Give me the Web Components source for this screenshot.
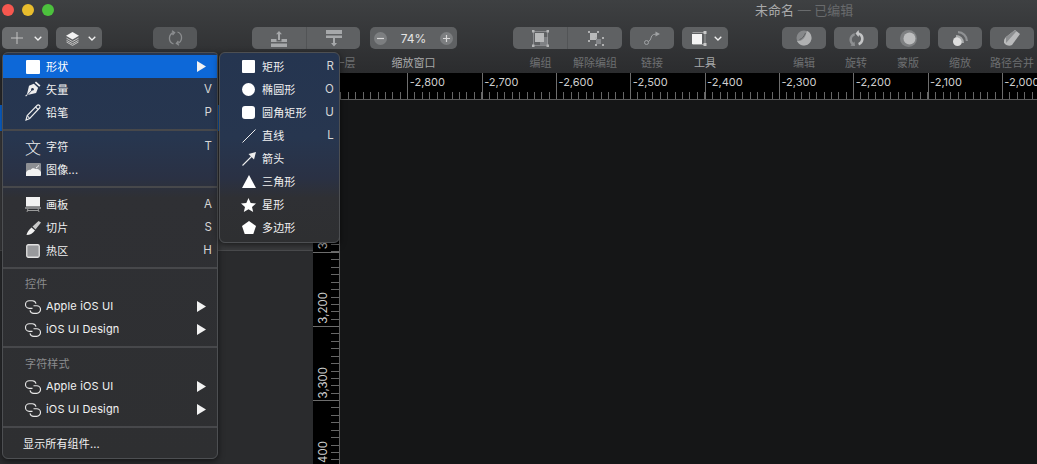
<!doctype html>
<html lang="zh">
<head>
<meta charset="utf-8">
<title>未命名</title>
<style>
  html, body { margin: 0; height: 100%; background: #151617; overflow: hidden; }
  body { font-family: Inter, "Noto Sans CJK SC", sans-serif; }
  svg { display: block; }
</style>
</head>
<body>
<svg width="0" height="0" style="position:absolute">
  <defs>
    <g id="sym" fill="none" stroke="#e8e8e8" stroke-width="1.150">
      <path d="M7.500 8.300H4.300a3.800 3.800 0 0 1 0-7.600h3a3.800 3.800 0 0 1 3.700 3"/>
      <path d="M8.500 5.700h3.200a3.800 3.800 0 0 1 0 7.600h-3a3.800 3.800 0 0 1-3.700-3"/>
    </g>
  </defs>
</svg>

<app-window>
  <tool-bar slot="top" heading="未命名" status="— 已编辑">
    <tb-btn drop bright style="--w:46px">
      <svg width="12" height="12" viewBox="0 0 12 12"><path d="M6 0v12M0 6h12" stroke="#c4c4c4" stroke-width="1"/></svg>
    </tb-btn>
    <tb-btn drop style="--w:46px">
      <svg width="15" height="15" viewBox="0 0 15 15"><path d="M7.500 1L14 4.800 7.500 8.600 1 4.800z" fill="#f2f2f2"/><path d="M1.500 7.200l6 3.400 6-3.400M1.500 9.300l6 3.400 6-3.400M1.500 11l6 3.400 6-3.400" fill="none" stroke="#cfcfcf" stroke-width=".9"/></svg>
    </tb-btn>
    <tb-btn dim style="--w:44px;margin-left:43px">
      <svg width="15" height="16" viewBox="0 0 15 16" fill="none" stroke="#8b8d8f" stroke-width="1.300"><path d="M5.500 14A6 6 0 0 1 6 2.500"/><path d="M9.500 2A6 6 0 0 1 9 13.500"/><path d="M4 .8l2.600 1.800L4.500 5M11 15.200l-2.600-1.800 2-2.400"/></svg>
    </tb-btn>
    <tb-btn seg="l" style="--w:55px;margin-left:47px">
      <svg width="16" height="17" viewBox="0 0 16 17"><path d="M8 1l3 3.200H9V10H7V4.200H5z" fill="#a6a8aa"/><path d="M0 9h5.500v2.500H10.500V9H16v3H0zM0 13.500h16V17H0z" fill="#a6a8aa"/></svg>
    </tb-btn>
    <tb-btn seg="r" label="下移一层" style="--w:53px;margin-left:-8px">
      <svg width="16" height="17" viewBox="0 0 16 17"><path d="M0 0h16v4H0zM0 5.500h16V8H9v5h2l-3 3.500L5 13h2V8H0z" fill="#a6a8aa"/></svg>
    </tb-btn>
    <zoom-stepper value="74%" label="缩放窗口" style="margin-left:2px"></zoom-stepper>
    <tb-btn seg="l" label="编组" style="--w:55px;margin-left:48px">
      <svg width="17" height="17" viewBox="0 0 17 17"><rect x="8" y="7" width="8" height="8" fill="#7f8184"/><rect x="3" y="3" width="9" height="9" fill="#b8b9ba"/><path d="M1.500 1.500h14v14h-14z" fill="none" stroke="#a4a5a7" stroke-width=".6"/><path d="M0 0h2.500v2.500H0zM14.500 0H17v2.500h-2.500zM0 14.500h2.500V17H0zM14.500 14.500H17V17h-2.500z" fill="#b4b5b6"/></svg>
    </tb-btn>
    <tb-btn seg="r" label="解除编组" style="--w:54px;margin-left:-8px">
      <svg width="17" height="17" viewBox="0 0 17 17"><rect x="3" y="3" width="7" height="7" fill="#b8b9ba"/><rect x="9" y="9" width="5" height="5" fill="#85878a"/><path d="M1 1h2v2H1zM10 1h2v2h-2zM1 10h2v2H1zM8 7h2v2H8zM15 7h2v2h-2zM8 14h2v2H8zM15 14h2v2h-2z" fill="#b0b1b2"/></svg>
    </tb-btn>
    <tb-btn label="链接" style="--w:44px">
      <svg width="16" height="14" viewBox="0 0 16 14" fill="none" stroke="#a0a2a4" stroke-width="1"><circle cx="2.500" cy="11.500" r="2"/><path d="M4.300 10.500C8 9.500 6 4.500 9.500 3.500l2.500-.4"/><path d="M11.500 .5L16 3l-4.500 2.500z" fill="#a0a2a4" stroke="none"/></svg>
    </tb-btn>
    <tb-btn drop label="工具" lit style="--w:46px">
      <svg width="16" height="15" viewBox="0 0 16 15"><path d="M1 3h10v10H1z" fill="#f4f4f4"/><path d="M1.500 1.500h12.500v12H1.500" fill="none" stroke="#b8b8b8" stroke-width=".7"/><path d="M12.500 0h3v3h-3zM12.500 12h3v3h-3z" fill="#c8c8c8"/></svg>
    </tb-btn>
    <tb-btn label="编辑" style="--w:44px;margin-left:46px">
      <svg width="16" height="16" viewBox="0 0 16 16"><circle cx="8" cy="8" r="7.500" fill="#86888a"/><path d="M1 11c4 .5 7-2 8.500-5.500L11 1c3 1 4.500 4 4.500 7 0 4-3.500 7.500-7.500 7.500-3 0-6-2-7-4.500z" fill="#b0b1b2"/><path d="M3.500 9.500C6 9 8 6.500 9.500 3" stroke="#5e6062" fill="none"/></svg>
    </tb-btn>
    <tb-btn label="旋转" style="--w:44px">
      <svg width="15" height="16" viewBox="0 0 15 16"><path d="M9.500 0l.5 2.600c3 .8 5 3.400 4.600 6.800-.3 2.700-2.100 5-4.600 6l-.8-2.500c1.600-.8 2.700-2.200 2.800-4 .1-1.700-.7-3.100-2-4L9.500 7l-3-3.500z" fill="#c4c5c6"/><path d="M5.500 3C2.500 4 .4 6.600.4 9.600c0 2 .8 3.700 2.100 4.900L1.500 15.700l4.500.3-.5-4.500-1.200 1.200C3.400 11.800 2.900 10.800 2.900 9.500c0-1.700 1.200-3.200 3-3.900z" fill="#8e9092"/></svg>
    </tb-btn>
    <tb-btn label="蒙版" style="--w:44px">
      <svg width="17" height="17" viewBox="0 0 17 17"><circle cx="8.500" cy="8.500" r="8.500" fill="#7e8082"/><circle cx="9.500" cy="8.500" r="6" fill="#bcbdbe"/></svg>
    </tb-btn>
    <tb-btn label="缩放" style="--w:44px">
      <svg width="15" height="15" viewBox="0 0 15 15"><circle cx="4.500" cy="10.500" r="4.500" fill="#dedede"/><path d="M3 4a8 8 0 0 1 8 8h-2a6 6 0 0 0-6-6z" fill="#a9abac"/><path d="M5 0a10 10 0 0 1 10 10h-2.200A8 8 0 0 0 5 2.200z" fill="#8f9193"/></svg>
    </tb-btn>
    <tb-btn label="路径合并" style="--w:44px">
      <svg width="16" height="16" viewBox="0 0 16 16"><path d="M11 0l5 4-8 11c-2 1-5 1-7-1S0 9 2 7z" fill="#b9babb"/><path d="M2 7l9-7 1.500 1.200L2 13z" fill="#8c8e90"/></svg>
    </tb-btn>
  </tool-bar>

  <side-panel slot="side"></side-panel>
  <v-ruler slot="vruler" first="3000" count="5"></v-ruler>
  <h-ruler slot="hruler" first="-2800" count="10"></h-ruler>

  <pop-menu slot="over" class="main">
    <menu-row label="形状" arrow active>
      <svg width="14" height="14"><rect width="14" height="14" rx="1" fill="#fff"/></svg>
    </menu-row>
    <menu-row label="矢量" shortcut="V">
      <svg width="16" height="17" viewBox="0 0 16 17"><path d="M11 .5l4.500 4-1.200 1.300-4.500-4z" fill="#eee"/><path d="M8.800 2.700l4.300 4-2 5.200L2.500 14 1 15.500l-.8-.7L2 13.200 4 4.700z" fill="#eee"/><circle cx="7.500" cy="8.300" r="1.300" fill="#26344f"/><path d="M2.500 14L7 9" stroke="#26344f" stroke-width=".8"/></svg>
    </menu-row>
    <menu-row label="铅笔" shortcut="P">
      <svg width="16" height="17" viewBox="0 0 16 17" fill="none" stroke="#eee" stroke-width="1.100"><path d="M1 16l1.200-4.500L12 1.500a1.600 1.600 0 0 1 2.500 2.500L4.700 14.500z"/><path d="M2.200 11.500l2.500 3M10.500 3l2.800 2.700"/></svg>
    </menu-row>
    <menu-sep></menu-sep>
    <menu-row label="字符" shortcut="T"><glyph-icon>文</glyph-icon></menu-row>
    <menu-row label="图像...">
      <svg width="15" height="13" viewBox="0 0 15 13"><rect width="15" height="13" rx="1" fill="#8d8f93"/><path d="M0 13V9.500C1 7.500 3 6.500 4.500 7c1-2 3.500-2.500 5-1 1.500-.5 3.500 0 5.500 3v3a1 1 0 0 1-1 1z" fill="#f2f2f2"/><path d="M10 4.500c1.500 0 2.300-1 2.500-2.200" stroke="#eee" fill="none"/></svg>
    </menu-row>
    <menu-sep gap="12"></menu-sep>
    <menu-row label="画板" shortcut="A">
      <svg width="16" height="15" viewBox="0 0 16 15"><path d="M1 0h14v9.500H1z" fill="#f2f2f2"/><path d="M0 10.500h16v1H0z" fill="#d8d8d8"/><path d="M3 11.500L2 15M13 11.500l1 3.500M3 13.500h10" stroke="#a8a8a8" fill="none" stroke-width=".9"/></svg>
    </menu-row>
    <menu-row label="切片" shortcut="S">
      <svg width="15" height="14" viewBox="0 0 15 14"><path d="M.5 14C1 11 3 9 5.500 6.500L9 9.500C6.500 12.500 4 14 .5 14z" fill="#f2f2f2"/><path d="M6.500 5.500l6-5.500L15 1.500 9.500 8.500z" fill="#c8c8c8"/></svg>
    </menu-row>
    <menu-row label="热区" shortcut="H">
      <svg width="14" height="14"><rect x=".75" y=".75" width="12.500" height="12.500" rx="1.500" fill="#98999c" stroke="#e2e2e2" stroke-width="1.300"/></svg>
    </menu-row>
    <menu-sep></menu-sep>
    <menu-row heading label="控件"></menu-row>
    <menu-row label="Apple iOS UI" arrow><svg width="16" height="14" viewBox="0 0 16 14"><use href="#sym"/></svg></menu-row>
    <menu-row label="iOS UI Design" arrow><svg width="16" height="14" viewBox="0 0 16 14"><use href="#sym"/></svg></menu-row>
    <menu-sep gap="12"></menu-sep>
    <menu-row heading label="字符样式"></menu-row>
    <menu-row label="Apple iOS UI" arrow><svg width="16" height="14" viewBox="0 0 16 14"><use href="#sym"/></svg></menu-row>
    <menu-row label="iOS UI Design" arrow><svg width="16" height="14" viewBox="0 0 16 14"><use href="#sym"/></svg></menu-row>
    <menu-sep></menu-sep>
    <menu-row plain label="显示所有组件..."></menu-row>
  </pop-menu>

  <pop-menu slot="over" class="sub">
    <menu-row sub label="矩形" shortcut="R">
      <svg width="13" height="13"><rect width="13" height="13" rx="1" fill="#fff"/></svg>
    </menu-row>
    <menu-row sub label="椭圆形" shortcut="O">
      <svg width="13" height="13"><circle cx="6.500" cy="6.500" r="6.500" fill="#fff"/></svg>
    </menu-row>
    <menu-row sub label="圆角矩形" shortcut="U">
      <svg width="13" height="13"><rect width="13" height="13" rx="3" fill="#fff"/></svg>
    </menu-row>
    <menu-row sub label="直线" shortcut="L">
      <svg width="14" height="14"><path d="M.5 13.500L13.500.5" stroke="#eee" stroke-width="1"/></svg>
    </menu-row>
    <menu-row sub label="箭头">
      <svg width="14" height="14"><path d="M.5 13.500L10 4" stroke="#eee" stroke-width="1.100"/><path d="M14 0l-2 7.500L6.500 2z" fill="#eee"/></svg>
    </menu-row>
    <menu-row sub label="三角形">
      <svg width="14" height="13"><path d="M7 0l7 13H0z" fill="#fff"/></svg>
    </menu-row>
    <menu-row sub label="星形">
      <svg width="15" height="14" viewBox="0 0 15 14"><path d="M7.500 0l2.200 4.900 5.300.5-4 3.500 1.200 5.100-4.700-2.700L2.800 14 4 8.900 0 5.400l5.300-.5z" fill="#fff"/></svg>
    </menu-row>
    <menu-row sub label="多边形">
      <svg width="14" height="13"><path d="M7 0l7 5-2.700 8H2.700L0 5z" fill="#fff"/></svg>
    </menu-row>
  </pop-menu>
</app-window>

<script>
function shell(el, html) {
  el.attachShadow({ mode: "open" }).innerHTML = html;
}

class AppWindow extends HTMLElement {
  constructor() {
    super();
    shell(this, `<style>
      :host { display: grid; position: relative; width: 1037px; height: 464px; overflow: hidden;
        grid-template-columns: 313px 27px 1fr; grid-template-rows: 73px 27px 1fr; background: #151617; color: #eee; }
      .top { grid-column: 1 / -1; }
      .side { grid-column: 1; grid-row: 2 / 4; }
      .vr { grid-column: 2; grid-row: 2 / 4; }
      .hr { grid-column: 2 / -1; grid-row: 2; z-index: 1; min-width: 0; overflow: hidden; }
    </style>
    <div class="top"><slot name="top"></slot></div>
    <div class="side"><slot name="side"></slot></div>
    <div class="vr"><slot name="vruler"></slot></div>
    <div class="hr"><slot name="hruler"></slot></div>
    <slot name="over"></slot>`);
  }
}

class ToolBar extends HTMLElement {
  constructor() {
    super();
    shell(this, `<style>
      :host { display: block; height: 73px; background: linear-gradient(#3e4042, #2b2c2e); }
      .head { display: flex; align-items: center; height: 27px; padding: 0 0 8px 2px; box-sizing: border-box; gap: 8px; }
      .head i { width: 12px; height: 12px; border-radius: 50%; }
      .head b { margin-left: 693px; font: 400 13px Inter, "Noto Sans CJK SC", sans-serif; color: #a9aaab; white-space: nowrap; }
      .head span { color: #696b6d; }
      .tools { display: flex; gap: 8px; padding-left: 2px; align-items: flex-start; }
    </style>
    <div class="head"><i style="background:#f6574f"></i><i style="background:#e8bd2d"></i><i style="background:#4cc13d"></i>
      <b>${this.getAttribute("heading")} <span>${this.getAttribute("status")}</span></b></div>
    <div class="tools"><slot></slot></div>`);
  }
}

class TbBtn extends HTMLElement {
  constructor() {
    super();
    const drop = this.hasAttribute("drop");
    const label = this.getAttribute("label") || "";
    shell(this, `<style>
      :host { display: flex; flex-direction: column; align-items: center; width: var(--w); flex: none; }
      .b { width: 100%; height: 22px; box-sizing: border-box; display: flex; align-items: center; justify-content: center;
        background: #5f6163; border-radius: 5px; }
      :host([bright]) .b { background: #6b6d6f; }
      :host([dim]) .b { background: #555759; }
      :host([seg="l"]) .b { border-radius: 5px 0 0 5px; border-right: 1px solid #525456; }
      :host([seg="r"]) .b { border-radius: 0 5px 5px 0; }
      .drop { justify-content: flex-start; padding-left: 9px; gap: 0; }
      .chev { margin-left: auto; margin-right: 6px; }
      .l { font: 400 11px/16px Inter, "Noto Sans CJK SC", sans-serif; color: #6d6f71; white-space: nowrap; margin-top: 6px; height: 16px; }
      :host([lit]) .l { color: #a8a9aa; }
    </style>
    <div class="b ${drop ? "drop" : ""}"><slot></slot>${drop ? `<svg class="chev" width="8" height="5" viewBox="0 0 8 5"><path d="M.7.7L4 4l3.300-3.300" fill="none" stroke="#f0f0f0" stroke-width="1.300"/></svg>` : ""}</div>
    <div class="l">${label}</div>`);
  }
}

class ZoomStepper extends HTMLElement {
  constructor() {
    super();
    shell(this, `<style>
      :host { display: flex; flex-direction: column; align-items: center; width: 87px; flex: none; }
      .b { width: 100%; height: 22px; box-sizing: border-box; padding: 0 4px; display: flex; align-items: center; justify-content: space-between;
        background: #5f6163; border-radius: 5px; font: 400 12px Inter, sans-serif; color: #e4e4e4; }
      .c { width: 13px; height: 13px; border-radius: 50%; background: #7c7e80; display: flex; align-items: center; justify-content: center; }
      .l { font: 400 11px/16px Inter, "Noto Sans CJK SC", sans-serif; color: #a8a9aa; white-space: nowrap; margin-top: 6px; }
    </style>
    <div class="b">
      <span class="c"><svg width="7" height="7"><path d="M0 3.500h7" stroke="#d8d8d8" stroke-width="1.200"/></svg></span>
      <span>${this.getAttribute("value")}</span>
      <span class="c"><svg width="7" height="7"><path d="M0 3.500h7M3.500 0v7" stroke="#d8d8d8" stroke-width="1.200"/></svg></span>
    </div>
    <div class="l">${this.getAttribute("label")}</div>`);
  }
}

class SidePanel extends HTMLElement {
  constructor() {
    super();
    shell(this, `<style>
      :host { display: flex; flex-direction: column; height: 391px; background: #2a2b2d; }
      .sel { margin-top: 32px; height: 26px; background: #0d68d8; flex: none; }
      .block { height: 119px; background: #3a3b3d; border-bottom: 1px solid #4a4b4d; flex: none; }
    </style>
    <div class="sel"></div><div class="block"></div>`);
  }
}

const fmt = n => (n < 0 ? "-" : "") + Math.abs(n).toLocaleString("en-US");

class HRuler extends HTMLElement {
  constructor() {
    super();
    const first = +this.getAttribute("first");
    const n = +this.getAttribute("count");
    let cells = `<div class="c"></div>`;
    for (let i = 0; i < n; i++) cells += `<div class="c">${fmt(first + i * 100)}</div>`;
    shell(this, `<style>
      :host { display: block; height: 27px; overflow: hidden; background: #000; }
      .r { display: flex; padding-left: 20px; height: 26px; border-bottom: 1px solid #5d5d5d; }
      .c { flex: 0 0 74.320px; box-sizing: border-box; border-left: 1px solid #6e6e6e; padding: 2px 0 0 1.500px;
        font: 400 11px/14px Inter, sans-serif; color: #cfcfcf; white-space: nowrap;
        background: repeating-linear-gradient(90deg, transparent 0 6.432px, #666 6.432px 7.432px) 0 100% / 100% 7px no-repeat; }
    </style><div class="r">${cells}</div>`);
  }
}

class VRuler extends HTMLElement {
  constructor() {
    super();
    const first = +this.getAttribute("first");
    const n = +this.getAttribute("count");
    let cells = "";
    for (let i = 0; i < n; i++) cells += `<div class="c"><span>${fmt(first + i * 100)}</span></div>`;
    shell(this, `<style>
      :host { display: block; height: 391px; overflow: hidden; background: #000; border-right: 1px solid #5d5d5d; box-sizing: border-box; }
      .r { padding-top: 31.100px; }
      .c { height: 74.320px; box-sizing: border-box; border-bottom: 1px solid #6e6e6e; display: flex; align-items: flex-end; padding: 0 0 2px 3px;
        background: repeating-linear-gradient(180deg, transparent 0 6.432px, #666 6.432px 7.432px) 100% 0 / 8px 100% no-repeat; }
      span { writing-mode: vertical-rl; transform: rotate(180deg); font: 400 11.500px/14px Inter, sans-serif; color: #cfcfcf; }
    </style><div class="r">${cells}</div>`);
  }
}

class PopMenu extends HTMLElement {
  constructor() {
    super();
    shell(this, `<style>
      :host { display: block; position: absolute; top: 52px; box-sizing: border-box; padding: 2px 0 4px; border-radius: 6px; z-index: 3;
        border: 1px solid #4d4f52; box-shadow: 0 2px 6px rgba(0,0,0,.55);
        background: linear-gradient(#253550 0, #27364f 85px, #2a3144 125px, #2f3034 145px, #2e2f31 100%); }
      :host(.main) { left: 2px; width: 216px; height: 407px; border-top-right-radius: 4px; }
      :host(.sub) { left: 219px; width: 121px; height: 191px; z-index: 4; }
    </style><slot></slot>`);
  }
}

class MenuRow extends HTMLElement {
  constructor() {
    super();
    const key = this.getAttribute("shortcut");
    const arrow = this.hasAttribute("arrow");
    shell(this, `<style>
      :host { display: flex; align-items: center; height: 23px; box-sizing: border-box; padding-left: 20px;
        font: 400 11px Inter, "Noto Sans CJK SC", sans-serif; letter-spacing: .15px; color: #f1f1f1; white-space: nowrap; }
      :host([active]) { background: #0d68d8; color: #fff; }
      :host([heading]) { height: 22px; padding-left: 22px; color: #8b8c8e; }
      :host([plain]) { padding-left: 20px; }
      .i { width: 20px; flex: none; margin-right: 3px; display: flex; justify-content: center; }
      :host([sub]) .i { width: 17px; margin-right: 5px; }
      :host([heading]) .i, :host([plain]) .i { display: none; }
      .t { margin-bottom: 2px; }
      .k { margin-left: auto; margin-right: 5px; margin-bottom: 1px; font-size: 11.500px; color: #d6d6d6; }
      .a { margin-left: auto; margin-right: 11px; }
    </style>
    <span class="i"><slot></slot></span><span class="t">${this.getAttribute("label")}</span>
    ${key ? `<span class="k">${key}</span>` : ""}
    ${arrow ? `<svg class="a" width="9" height="11"><path d="M0 0l9 5.500L0 11z" fill="#f2f2f2"/></svg>` : ""}`);
  }
}

class MenuSep extends HTMLElement {
  constructor() {
    super();
    const gap = this.getAttribute("gap") || 11;
    shell(this, `<style>
      :host { display: flex; align-items: center; height: ${gap}px; }
      i { flex: 1; height: 2px; background: #47484b; }
    </style><i></i>`);
  }
}

class GlyphIcon extends HTMLElement {
  constructor() {
    super();
    shell(this, `<style>
      :host { display: block; font: 300 16px/16px "Noto Sans CJK SC", sans-serif; color: #eee; }
    </style><slot></slot>`);
  }
}

customElements.define("app-window", AppWindow);
customElements.define("tool-bar", ToolBar);
customElements.define("tb-btn", TbBtn);
customElements.define("zoom-stepper", ZoomStepper);
customElements.define("side-panel", SidePanel);
customElements.define("h-ruler", HRuler);
customElements.define("v-ruler", VRuler);
customElements.define("pop-menu", PopMenu);
customElements.define("menu-row", MenuRow);
customElements.define("menu-sep", MenuSep);
customElements.define("glyph-icon", GlyphIcon);
</script>
</body>
</html>
